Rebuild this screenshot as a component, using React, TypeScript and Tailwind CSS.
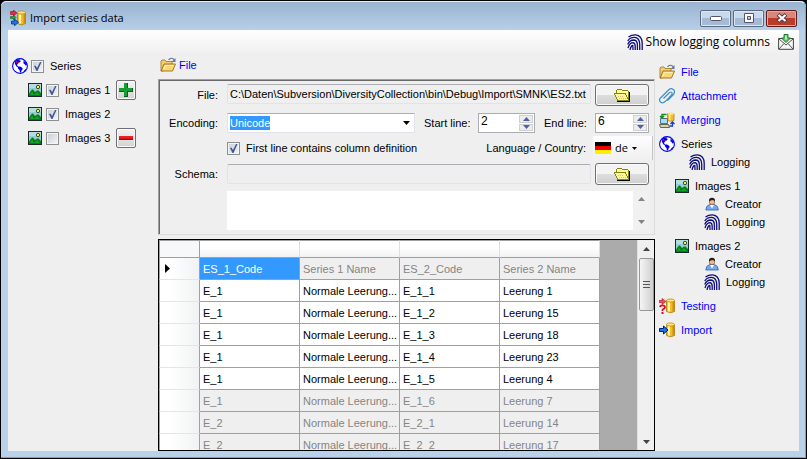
import type { ReactNode } from "react";

const GlobeIcon = () => (
  <svg width="16" height="16" viewBox="0 0 16 16" className="shrink-0">
    <circle cx="8" cy="8" r="7.4" fill="#fff" stroke="#0000f0" strokeWidth="1.1" />
    <path
      d="M2.500 3.500L5 1.500 8 1.200 7.500 2.500 9 3 7.500 4.500 6 5.500 5 7 6 8.500 8 8.500 10.500 10 10.500 11.500 9.500 12.500 9 14.500 8 14.500 7.500 12 6 10.500 6 9.500 4.500 8.500 3 6z"
      fill="#0000f0"
    />
    <path d="M11.500 2.500L14 4.500 15 7 13.500 7.500 12.500 6 11.500 5.500z M12.500 12L14.500 10.500 13 13.500 11.500 14z" fill="#0000f0" />
    <path d="M3.500 3H5v1.500H3.500zM5.500 4H7v1H5.500z" fill="#e01030" />
  </svg>
);

const PictureIcon = () => (
  <svg width="14" height="14" viewBox="0 0 14 14" className="shrink-0">
    <rect width="14" height="14" fill="#1a2a2a" />
    <rect x="1" y="1" width="12" height="12" fill="#8fd0d0" />
    <rect x="1" y="1" width="12" height="4" fill="#b4dede" />
    <path d="M1 11l1-2 2-2.500h1L7 9l2-1.500h1.500L13 10v3H1z" fill="#087a18" />
    <path d="M2 12l2-4 1 2 1 2 3-3 2 2 1 1z" fill="#10a428" />
    <circle cx="10" cy="4" r="1.700" fill="#f8f040" stroke="#222" strokeWidth=".8" />
  </svg>
);

const PrintIcon = () => (
  <svg
    width="16"
    height="16"
    viewBox="0 0 16 16"
    fill="none"
    stroke="#10107c"
    strokeWidth="1.300"
    className="shrink-0"
  >
    <path d="M1.500 3Q4.500.7 8.500.8Q15 1.500 15.200 9V16" />
    <path d="M.7 7Q3 3.300 7.500 3.400Q12.500 3.800 12.700 10V16" />
    <path d="M.7 10.500Q2.500 6 7 6Q10.300 6.300 10.400 11V16" />
    <path d="M1 14Q2.500 8.700 6.200 8.700Q8.200 9 8.200 12.500V16" />
    <path d="M3 16Q4 11.500 5.800 11.500Q6 13 6 16" />
  </svg>
);

const OpenFolderIcon = () => (
  <svg width="16" height="16" viewBox="0 0 16 16" className="shrink-0">
    <path d="M1 4l1-1h3l1 1.500h6V7L3 14H1z" fill="#f3cf72" stroke="#a87a26" strokeWidth=".9" />
    <path d="M1.200 14L4 7h11.500L12.500 14z" fill="#fbd774" stroke="#98691c" strokeWidth=".9" />
    <path d="M4 12.500L5.500 8.500h8" fill="none" stroke="#fff0b8" />
    <path d="M8.500 3Q11-.2 14 2.500" fill="none" stroke="#657796" strokeWidth="1.200" />
    <path d="M15.500 1v4h-4z" fill="#657796" />
  </svg>
);

const ClipIcon = () => (
  <svg width="16" height="16" viewBox="0 0 16 16" fill="none" className="shrink-0">
    <path
      d="M4.500 10.500L10.500 4.500Q12 3.500 12.800 4.500T12.500 7L6.500 13.300Q3.500 16 1.500 14T1.500 10L9.500 2Q12-.3 14.300 1.500T14.500 6.500L8.500 12.500"
      stroke="#3d91c8"
      strokeWidth="1.200"
    />
  </svg>
);

const Cylinder = () => (
  <>
    <path d="M7.500 2.500v11q4 2.500 8 0v-11z" fill="#f4bd24" stroke="#a87810" strokeWidth=".8" />
    <path d="M9 4v9.500h2V4z" fill="#fff3b0" />
    <path d="M13.500 4v9.500h1.500V3z" fill="#cf8c0c" />
    <ellipse cx="11.500" cy="2.500" rx="4" ry="1.600" fill="#ffe277" stroke="#b98c20" strokeWidth=".8" />
  </>
);

const TitleIcon = () => (
  <svg width="16" height="16" viewBox="0 0 16 16" className="shrink-0">
    <Cylinder />
    <path d="M.5 1.500h3V0L7 3 3.500 6V4.500h-3z" fill="#ee2445" stroke="#8f1025" strokeWidth=".6" />
    <path d="M.5 6.500h3V5L6 7.500 3.500 10V8.500h-3z" fill="#28a428" stroke="#0e5c18" strokeWidth=".6" />
    <path d="M1.500 11h3V9L8.500 12.300 4.500 15.800V14h-3z" fill="#1679e4" stroke="#08308c" strokeWidth=".8" />
  </svg>
);

const ImportIcon = () => (
  <svg width="16" height="16" viewBox="0 0 16 16" className="shrink-0">
    <Cylinder />
    <path d="M.5 6.500h4V4L9 8l-4.500 4V9.500h-4z" fill="#1679e4" stroke="#061c80" />
  </svg>
);

const TestIcon = () => (
  <svg width="16" height="16" viewBox="0 0 16 16" className="shrink-0">
    <Cylinder />
    <path d="M0 2.500h3V.5l4 3-4 3v-2H0z" fill="#f04860" stroke="#c01020" strokeWidth=".6" />
    <path d="M1 9q.3-1.700 2.500-1.700T6 9q0 1.300-1.500 2t-1 2" fill="none" stroke="#df1020" strokeWidth="1.800" />
    <path d="M2.500 14h2v2h-2z" fill="#df1020" />
  </svg>
);

const MergeIcon = () => (
  <svg width="16" height="16" viewBox="0 0 16 16" className="shrink-0">
    <path d="M8.500 1.500v7q3 1.500 6.500 0v-7z" fill="#f7b928" stroke="#a97a18" strokeWidth=".7" />
    <path d="M10 2v6.500h1.500V2z" fill="#fff0a0" />
    <ellipse cx="11.800" cy="1.700" rx="3.200" ry="1.200" fill="#ffe07a" />
    <path d="M1.500 6.500h7v5h-7z" fill="#a9dcf4" stroke="#55728a" />
    <path d="M.5 12.500h9l1 3h-9z" fill="#d8d4b4" stroke="#66664c" />
    <path d="M7.500 2.500H3V5M1 4l2 2 2-2" fill="none" stroke="#128c22" strokeWidth="1.400" />
    <path d="M10.500 14h3v-3.500m-2 1.500l2-2 2 2" fill="none" stroke="#1837e8" strokeWidth="1.300" />
  </svg>
);

const PersonIcon = () => (
  <svg width="14" height="14" viewBox="0 0 14 14" className="shrink-0">
    <path d="M.8 13q0-4.500 4-5.500h4.500q4 1 4 5.500z" fill="#76a9ee" stroke="#3262b0" strokeWidth=".8" />
    <path d="M5 8l2 3.500L9 8z" fill="#fff" />
    <circle cx="7" cy="5" r="2.700" fill="#eeb98e" stroke="#7d492e" strokeWidth=".6" />
    <path d="M4 4.500Q3.500.8 7 .8t3 3.700L8.500 3 5.500 3.500z" fill="#24201f" />
  </svg>
);

const FolderIcon = () => (
  <svg width="16" height="14" viewBox="0 0 16 14" shapeRendering="crispEdges">
    <path d="M3 13h12V4h1v10H3z" fill="#000" />
    <path d="M2.500 5.500V2.500l1-1h4l1 1h5l1 1v9h-11z" fill="#ffff9c" stroke="#85850a" />
    <path d="M.5 5.500h11l3 7h-11z" fill="#fafa9a" stroke="#85850a" />
    <path d="M4 8h1v1H4zm2 0h1v1H6zm2 0h1v1H8zm-3 2h1v1H5zm2 0h1v1H7zm2 0h1v1H9zm2 0h1v1h-1z" fill="#e8b878" />
  </svg>
);

const MailIcon = () => (
  <svg width="16" height="16" viewBox="0 0 16 16">
    <path d="M.6 4.500h14.800v10.800H.6z" fill="#f6f6f6" stroke="#444" />
    <path d="M1 5l7 6 7-6M1 15l5-5.500M15 15l-5-5.500" fill="none" stroke="#555" />
    <path d="M6 .5h4V4h2.500L8 8.500 3.500 4H6z" fill="#65c46b" stroke="#187a28" />
    <path d="M8 1.500v4" stroke="#d5f6d4" strokeWidth="1.500" />
  </svg>
);

const Triangle = ({ up = false, color = "#000" }: { up?: boolean; color?: string }) => (
  <svg width="7" height="4" viewBox="0 0 7 4" className="shrink-0">
    <path d={up ? "M0 4h7L3.500 0z" : "M0 0h7L3.500 4z"} fill={color} />
  </svg>
);

type CheckProps = { id: string; label: string; checked?: boolean };

const Check = ({ id, label, checked = false }: CheckProps) => (
  <>
    <span className="grid size-[13px] shrink-0">
      <input
        id={id}
        type="checkbox"
        defaultChecked={checked}
        className="peer size-[13px] appearance-none border border-[#8e8f8f] bg-linear-to-br from-[#c8cdd3] to-[#f6f6f6] shadow-[inset_0_0_0_1px_#f4f4f4] [grid-area:1/1]"
      />
      <svg
        viewBox="0 0 13 13"
        className="pointer-events-none invisible size-[13px] peer-checked:visible [grid-area:1/1]"
      >
        <path d="M3 6l1.500-.5L6 8l3-6h1.500L6.500 11H5.500z" fill="#3f5596" />
      </svg>
    </span>
    <label htmlFor={id} className="ml-1.5 whitespace-nowrap">
      {label}
    </label>
  </>
);

const SquareButton = ({ label, children }: { label: string; children: ReactNode }) => (
  <button
    aria-label={label}
    className="ml-auto grid size-5 place-items-center rounded-xs border border-[#707070] bg-linear-to-b from-[#f4f4f4] to-[#d2d2d2] shadow-[inset_0_0_0_1px_#fafafa]"
  >
    {children}
  </button>
);

const BrowseButton = ({ label }: { label: string }) => (
  <button
    aria-label={label}
    className="grid h-[22px] w-[54px] shrink-0 place-items-center rounded-[3px] border border-[#707070] bg-linear-to-b from-[#f3f3f3] from-50% via-[#dddddd] via-50% to-[#cfcfcf] shadow-[inset_0_0_0_1px_#fafafa]"
  >
    <FolderIcon />
  </button>
);

const Spinner = ({ id, value, width }: { id: string; value: string; width: string }) => (
  <div className={`flex h-5 shrink-0 border border-[#abadb3] bg-white ${width}`}>
    <input id={id} defaultValue={value} className="w-0 flex-1 pb-1 pl-0.5 text-xs outline-none" />
    <div className="flex w-4 flex-col gap-px p-px">
      <button aria-label="Up" className="grid flex-1 place-items-center border border-[#d0d0d0] bg-[#ececec]">
        <Triangle up color="#4a63a8" />
      </button>
      <button aria-label="Down" className="grid flex-1 place-items-center border border-[#d0d0d0] bg-[#ececec]">
        <Triangle color="#4a63a8" />
      </button>
    </div>
  </div>
);

const images = [
  { name: "Images 1", checked: true },
  { name: "Images 2", checked: true },
  { name: "Images 3", checked: false },
];

const SeriesPanel = () => (
  <aside className="flex w-[150px] shrink-0 flex-col pr-[22px] pl-1">
    <div className="flex h-6 items-center">
      <GlobeIcon />
      <span className="w-[3px]" />
      <Check id="series" label="Series" checked />
    </div>
    {images.map((image, i) => (
      <div key={image.name} className="flex h-6 items-center pl-4">
        <PictureIcon />
        <span className="w-1" />
        <Check id={`image-${i}`} label={image.name} checked={image.checked} />
        {i === 0 && (
          <SquareButton label="Add images">
            <svg width="14" height="14" viewBox="0 0 14 14">
              <path d="M5 0h4v5h5v4H9v5H5V9H0V5h5z" fill="#0b5c1c" />
              <path d="M5 0h3v5h5v3H8v5H5V8H0V5h5z" fill="#16a034" />
            </svg>
          </SquareButton>
        )}
        {i === 2 && (
          <SquareButton label="Remove images">
            <svg width="14" height="4" viewBox="0 0 14 4">
              <path d="M0 0h14v4H0z" fill="#a30c12" />
              <path d="M0 0h14v2.500H0z" fill="#ee2020" />
            </svg>
          </SquareButton>
        )}
      </div>
    ))}
  </aside>
);

const fieldClass =
  "h-5 min-w-0 flex-1 rounded-xs border border-[#e2e3ea] border-t-[#abadb3] bg-[#efefef] px-0.5 outline-none";

const FileForm = () => (
  <section className="flex h-[156px] shrink-0 flex-col border border-t-[#a0a0a0] border-r-[#dcdcdc] border-b-[#dcdcdc] border-l-[#a0a0a0] pt-1 pr-[5px] pl-[68px] shadow-[inset_1px_1px_0_#696969]">
    <div className="flex items-start gap-1">
      <label htmlFor="file" className="-ml-[68px] w-16 shrink-0 pt-1 pr-[5px] text-right">
        File:
      </label>
      <input
        id="file"
        readOnly
        defaultValue="C:\Daten\Subversion\DiversityCollection\bin\Debug\Import\SMNK\ES2.txt"
        className={fieldClass}
      />
      <BrowseButton label="Choose file" />
    </div>
    <div className="mt-[7px] flex items-center">
      <label htmlFor="encoding" className="-ml-[68px] w-[68px] shrink-0 pr-[9px] text-right">
        Encoding:
      </label>
      <div className="flex h-5 min-w-0 flex-1 items-center border border-[#e2e3ea] border-t-[#abadb3] bg-white pr-1 pl-0.5">
        <select
          id="encoding"
          className="field-sizing-content h-[14px] appearance-none bg-[#3399ff] text-white outline-none"
        >
          <option>Unicode</option>
        </select>
        <span className="flex-1" />
        <Triangle />
      </div>
      <label htmlFor="start" className="w-[63px] shrink-0 pl-[9px]">
        Start line:
      </label>
      <Spinner id="start" value="2" width="w-[57px]" />
      <label htmlFor="end" className="w-[60px] shrink-0 pl-[9px]">
        End line:
      </label>
      <Spinner id="end" value="6" width="w-[54px]" />
    </div>
    <div className="mt-[3px] flex h-6 items-center">
      <Check id="first-line" label="First line contains column definition" checked />
      <label htmlFor="language" className="ml-auto pr-[7px]">
        Language / Country:
      </label>
      <div className="-mr-1 flex h-6 w-[60px] items-center gap-1 border-r border-[#c4c4c4] bg-linear-to-b from-[#fdfdfd] to-[#f0f0f0] pl-0.5">
        <svg width="16" height="12" viewBox="0 0 16 12">
          <path d="M0 0h16v4H0z" fill="#000" />
          <path d="M0 4h16v4H0z" fill="#e00" />
          <path d="M0 8h16v4H0z" fill="#fe0" />
        </svg>
        <select
          id="language"
          className="field-sizing-content appearance-none font-['Open_Sans',sans-serif] text-[11px] outline-none"
        >
          <option>de</option>
        </select>
        <svg width="5" height="3" viewBox="0 0 5 3">
          <path d="M0 0h5L2.500 3z" />
        </svg>
      </div>
    </div>
    <div className="mt-[3px] flex items-center gap-1">
      <label htmlFor="schema" className="-ml-[68px] w-16 shrink-0 pr-[5px] text-right">
        Schema:
      </label>
      <input id="schema" readOnly className={fieldClass} />
      <BrowseButton label="Choose schema" />
    </div>
    <div className="mt-1.5 flex h-[39px] bg-white">
      <textarea aria-label="Schema description" className="min-w-0 flex-1 resize-none outline-none" />
      <div className="flex w-4 flex-col items-center justify-between bg-[#f1f1f1] py-1.5">
        <Triangle up color="#858585" />
        <Triangle color="#858585" />
      </div>
    </div>
  </section>
);

const rows = [
  ["ES_1_Code", "Series 1 Name", "ES_2_Code", "Series 2 Name"],
  ["E_1", "Normale Leerung...", "E_1_1", "Leerung 1"],
  ["E_1", "Normale Leerung...", "E_1_2", "Leerung 15"],
  ["E_1", "Normale Leerung...", "E_1_3", "Leerung 18"],
  ["E_1", "Normale Leerung...", "E_1_4", "Leerung 23"],
  ["E_1", "Normale Leerung...", "E_1_5", "Leerung 4"],
  ["E_1", "Normale Leerung...", "E_1_6", "Leerung 7"],
  ["E_2", "Normale Leerung...", "E_2_1", "Leerung 14"],
  ["E_2", "Normale Leerung...", "E_2_2", "Leerung 17"],
];

// Only lines 2 to 6 are imported, the others are greyed out
const cellColor = (row: number, col: number) => {
  if (row === 0 && col === 0) return "bg-[#3399ff] text-white";
  if (row === 0 || row > 5) return "bg-[#efefef] text-[#858585]";
  return "bg-white";
};

const DataGrid = () => (
  <section className="mt-1 flex min-h-0 flex-1 overflow-hidden border border-black bg-[#ababab]">
    <div className="min-w-0 flex-1 overflow-hidden">
      <table className="w-[441px] table-fixed border-separate border-spacing-0">
        <thead>
          <tr className="h-[18px]">
            <th className="w-[41px] border border-[#a0a0a0] bg-[#f7f8fa]" />
            {rows[0].map((name) => (
              <th
                key={name}
                className="w-[100px] border-t border-r border-b border-t-[#a0a0a0] border-r-[#dedfe1] border-b-[#a0a0a0] bg-linear-to-b from-white from-40% to-[#f1f2f4]"
              />
            ))}
          </tr>
        </thead>
        <tbody>
          {rows.map((row, i) => (
            <tr key={i} className="h-[22px]">
              <td className="border-r border-b border-l border-r-[#a0a0a0] border-b-[#e4e5e7] border-l-[#a0a0a0] bg-linear-to-r from-white from-25% to-[#f1f2f4] p-0 pl-[5px]">
                {i === 0 && (
                  <svg width="5" height="9" viewBox="0 0 5 9">
                    <path d="M0 0v9l5-4.500z" />
                  </svg>
                )}
              </td>
              {row.map((cell, j) => (
                <td
                  key={j}
                  className={`truncate border-r border-b border-[#a0a0a0] p-0 pl-[3px] ${cellColor(i, j)}`}
                >
                  {cell}
                </td>
              ))}
            </tr>
          ))}
        </tbody>
      </table>
    </div>
    <div className="flex w-[17px] shrink-0 flex-col items-center border-l border-[#e0e0e0] bg-[#f0f0f0] pt-[7px] pb-1.5">
      <Triangle up color="#444" />
      <div className="mt-[7px] flex h-[53px] w-[15px] flex-col items-center justify-center gap-0.5 rounded-xs border border-[#989898] bg-linear-to-r from-[#f5f5f5] to-[#cfcfcf]">
        <span className="h-px w-[7px] bg-[#555]" />
        <span className="h-px w-[7px] bg-[#555]" />
        <span className="h-px w-[7px] bg-[#555]" />
      </div>
      <span className="flex-1" />
      <Triangle color="#444" />
    </div>
  </section>
);

type StepProps = { icon: ReactNode; label: string; indent?: string; link?: boolean };

const Step = ({ icon, label, indent = "", link = false }: StepProps) => (
  <li className={`flex h-[18px] items-center gap-1.5 whitespace-nowrap ${indent}`}>
    {icon}
    {link ? (
      <a href="#" className="text-[#0000ff]">
        {label}
      </a>
    ) : (
      <span>{label}</span>
    )}
  </li>
);

const Steps = () => (
  <nav className="w-[144px] shrink-0 pt-[9px] pl-1">
    <ul>
      <Step icon={<OpenFolderIcon />} label="File" link />
      <Step icon={<ClipIcon />} label="Attachment" indent="mt-1.5" link />
      <Step icon={<MergeIcon />} label="Merging" indent="mt-1.5" link />
      <Step icon={<GlobeIcon />} label="Series" indent="mt-1.5" />
      <Step icon={<PrintIcon />} label="Logging" indent="pl-[30px]" />
      {["Images 1", "Images 2"].map((name) => (
        <li key={name} className="mt-1.5">
          <ul>
            <Step icon={<PictureIcon />} label={name} indent="pl-4" />
            <Step icon={<PersonIcon />} label="Creator" indent="pl-[46px]" />
            <Step icon={<PrintIcon />} label="Logging" indent="pl-[45px]" />
          </ul>
        </li>
      ))}
      <Step icon={<TestIcon />} label="Testing" indent="mt-1.5" link />
      <Step icon={<ImportIcon />} label="Import" indent="mt-1.5" link />
    </ul>
  </nav>
);

const windowButton =
  "grid h-[17px] w-[31px] place-items-center rounded-xs border border-[#5a6b80] bg-linear-to-b from-[#c9d8ea] from-50% to-[#a5bad4] to-50% shadow-[inset_0_0_0_1px_#dce7f3]";

const TitleBar = () => (
  <header className="flex h-7 shrink-0 items-center pt-1 pr-0.5 pl-0.5 font-['Open_Sans',sans-serif] text-[11px]">
    <TitleIcon />
    <h1 className="ml-1 flex-1">Import series data</h1>
    <div className="flex gap-0.5">
      <button aria-label="Minimize" className={windowButton}>
        <svg width="12" height="5" viewBox="0 0 12 5">
          <rect x=".5" y=".5" width="11" height="4" rx="1" fill="#fff" stroke="#535666" />
        </svg>
      </button>
      <button aria-label="Maximize" className={windowButton}>
        <svg width="12" height="10" viewBox="0 0 12 10">
          <path d="M1.500.5h9v9h-9zM4.500 3.500v3h3v-3z" fill="#fff" fillRule="evenodd" stroke="#535666" />
        </svg>
      </button>
      <button
        aria-label="Close"
        className="grid h-[17px] w-[31px] place-items-center rounded-xs border border-[#5c1c1c] bg-linear-to-b from-[#d9877a] from-50% to-[#bb3b28] to-50% shadow-[inset_0_0_0_1px_#e8a79c]"
      >
        <svg width="12" height="10" viewBox="0 0 12 10">
          <path d="M2 1.500l8 7M10 1.500l-8 7" stroke="#4b3b48" strokeWidth="4" />
          <path d="M2.500 2l7 6M9.500 2l-7 6" stroke="#fff" strokeWidth="2.200" />
        </svg>
      </button>
    </div>
  </header>
);

const App = () => {
  return (
    <div className="h-screen bg-black font-['Liberation_Sans',Arial,sans-serif] text-[11px] leading-[14px] text-black">
      <div className="flex h-full flex-col rounded-t-md border border-black bg-[#b9d1ea]">
        <div className="flex min-h-0 flex-1 flex-col rounded-t-md border-t border-r border-b border-t-[#e4eef8] border-r-[#35c4dc] border-b-[#35c4dc] bg-linear-to-b from-[#9ab4d1] to-[#b9d1ea] to-[30px] pr-1.5 pb-1.5 pl-[7px]">
          <TitleBar />
          <main className="flex min-h-0 flex-1 flex-col bg-[#efefef]">
            <div className="flex h-6 shrink-0 items-center justify-end gap-2 bg-linear-to-b from-white to-[#efefef] pr-[5px] font-['Open_Sans',sans-serif] text-xs">
              <button className="flex items-center gap-[3px]">
                <PrintIcon />
                Show logging columns
              </button>
              <button aria-label="Send feedback">
                <MailIcon />
              </button>
            </div>
            <div className="flex min-h-0 flex-1">
              <SeriesPanel />
              <div className="flex min-w-0 flex-1 flex-col">
                <h2 className="mb-[3px] flex h-[22px] shrink-0 items-center gap-[3px] pl-0.5 text-[#0000ff]">
                  <OpenFolderIcon />
                  File
                </h2>
                <FileForm />
                <DataGrid />
              </div>
              <Steps />
            </div>
          </main>
        </div>
      </div>
    </div>
  );
};

export default App;
